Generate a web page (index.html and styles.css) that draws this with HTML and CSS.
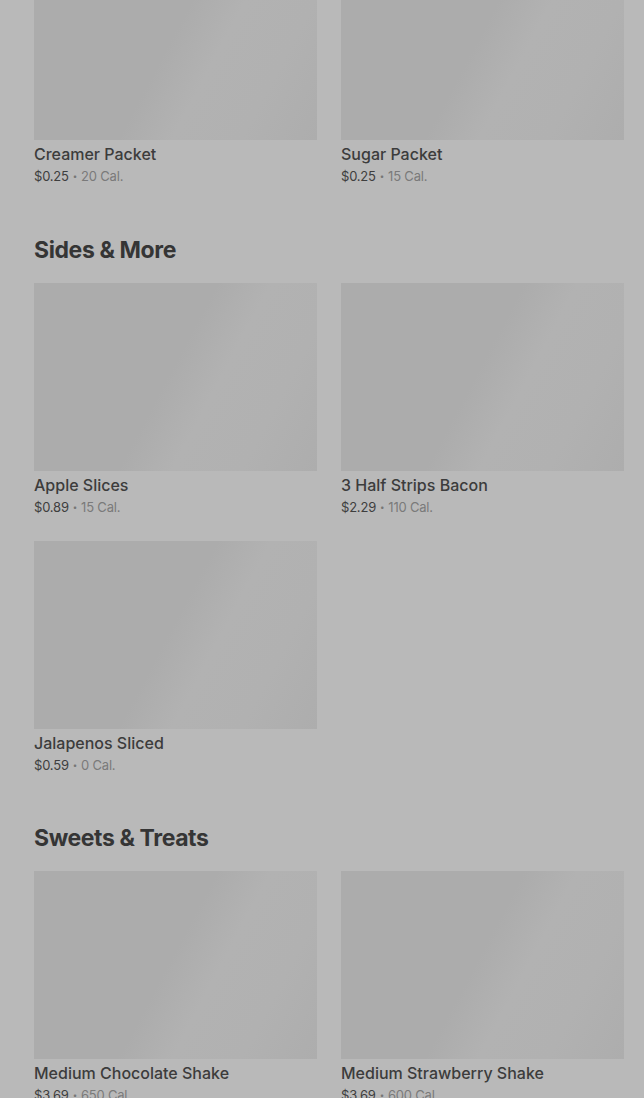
FILE: index.html
```html
<!DOCTYPE html>
<html lang="en">
<head>
    <meta charset="UTF-8">
    <meta name="viewport" content="width=device-width, initial-scale=1.0">
    <title>Menu</title>
    <link rel="stylesheet" href="styles.css">
</head>
<body>
    <div class="menu">
        <section class="section section-first">
            <div class="grid">
                <div class="item">
                    <div class="thumb"></div>
                    <div class="name">Creamer Packet</div>
                    <div class="meta"><span class="price">$0.25</span><span class="dot">•</span><span class="cal">20 Cal.</span></div>
                </div>
                <div class="item">
                    <div class="thumb"></div>
                    <div class="name">Sugar Packet</div>
                    <div class="meta"><span class="price">$0.25</span><span class="dot">•</span><span class="cal">15 Cal.</span></div>
                </div>
            </div>
        </section>

        <section class="section">
            <h2 class="section-title">Sides &amp; More</h2>
            <div class="grid">
                <div class="item">
                    <div class="thumb"></div>
                    <div class="name">Apple Slices</div>
                    <div class="meta"><span class="price">$0.89</span><span class="dot">•</span><span class="cal">15 Cal.</span></div>
                </div>
                <div class="item">
                    <div class="thumb"></div>
                    <div class="name">3 Half Strips Bacon</div>
                    <div class="meta"><span class="price">$2.29</span><span class="dot">•</span><span class="cal">110 Cal.</span></div>
                </div>
                <div class="item">
                    <div class="thumb"></div>
                    <div class="name">Jalapenos Sliced</div>
                    <div class="meta"><span class="price">$0.59</span><span class="dot">•</span><span class="cal">0 Cal.</span></div>
                </div>
            </div>
        </section>

        <section class="section">
            <h2 class="section-title">Sweets &amp; Treats</h2>
            <div class="grid">
                <div class="item">
                    <div class="thumb"></div>
                    <div class="name">Medium Chocolate Shake</div>
                    <div class="meta"><span class="price">$3.69</span><span class="dot">•</span><span class="cal">650 Cal.</span></div>
                </div>
                <div class="item">
                    <div class="thumb"></div>
                    <div class="name">Medium Strawberry Shake</div>
                    <div class="meta"><span class="price">$3.69</span><span class="dot">•</span><span class="cal">600 Cal.</span></div>
                </div>
            </div>
        </section>
    </div>
</body>
</html>
```

FILE: styles.css
```css
body {
    margin: 0;
    padding: 0;
    background-color: #b9b9b9;
    font-family: Inter, "Liberation Sans", Arial, sans-serif;
    color: #3a3a3a;
    overflow: hidden;
    height: 1098px;
}

.menu {
    padding: 0 20px 0 34px;
    margin-top: -48px;
}

.section {
    margin-bottom: 47px;
}

.section-first {
    margin-bottom: 48px;
}

.section-title {
    margin: 0 0 17px;
    font-size: 23px;
    line-height: 32px;
    font-weight: 700;
    letter-spacing: -0.4px;
    color: #353535;
}

.grid {
    display: grid;
    grid-template-columns: 283px 283px;
    column-gap: 24px;
    row-gap: 24px;
}

.thumb {
    height: 188px;
    background: linear-gradient(118deg, #acacac 0%, #acacac 48%, #b2b2b2 62%, #b1b1b1 80%, #adadad 100%);
}

.name {
    margin-top: 4px;
    font-size: 16px;
    line-height: 20px;
    font-weight: 500;
    color: #3c3c3c;
}

.meta {
    margin-top: 2px;
    font-size: 13px;
    line-height: 20px;
    letter-spacing: -0.2px;
    color: #767676;
}

.meta .price {
    color: #3e3e3e;
}

.meta .dot {
    font-size: 8px;
    margin: 0 4px;
    vertical-align: 2px;
}

.meta .cal {
    color: #7a7a7a;
}
```
